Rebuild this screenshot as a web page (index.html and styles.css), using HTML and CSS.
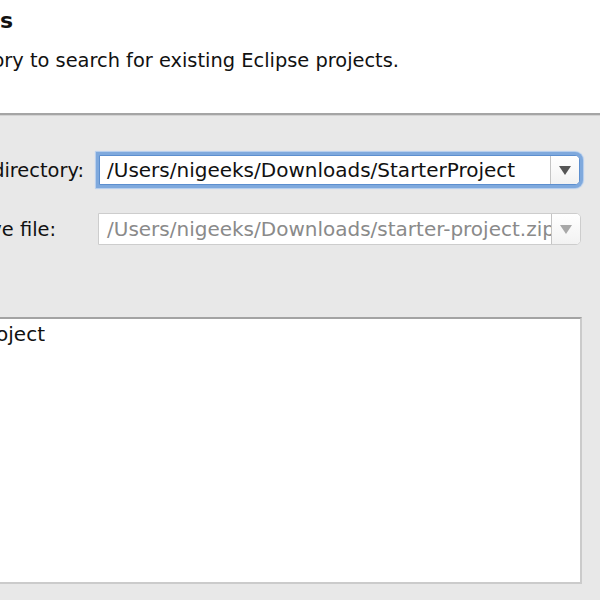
FILE: index.html
```html
<!DOCTYPE html>
<html>
<head>
<meta charset="utf-8">
<link rel="stylesheet" href="styles.css">
</head>
<body>
<div class="header">
  <div class="clip title-clip"><span class="title">Import Projects</span></div>
  <div class="clip sub-clip"><span class="subtitle">Select a directory to search for existing Eclipse projects.</span></div>
</div>
<div class="content">
  <div class="form">
    <div class="clip label label-1"><span>Select root directory:</span></div>
    <div class="combo focused">
      <div class="combo-text">/Users/nigeeks/Downloads/StarterProject</div>
      <div class="combo-btn"><span class="arrow"></span></div>
    </div>
    <div class="clip label label-2"><span>Select archive file:</span></div>
    <div class="combo disabled">
      <div class="combo-text">/Users/nigeeks/Downloads/starter-project.zip</div>
      <div class="combo-btn"><span class="arrow"></span></div>
    </div>
  </div>
  <div class="tree">
    <div class="clip tree-item"><span>☑ StarterProject</span></div>
  </div>
</div>
</body>
</html>
```

FILE: styles.css
```css
html, body {
  margin: 0;
  padding: 0;
}
body {
  width: 600px;
  height: 600px;
  overflow: hidden;
  background: #e8e8e8;
  font-family: "DejaVu Sans", "Liberation Sans", sans-serif;
  font-size: 20px;
  color: #111;
}
.clip {
  display: flex;
  justify-content: flex-end;
  overflow: hidden;
  white-space: nowrap;
}
.header {
  height: 115px;
  background: #fff;
  border-bottom: 2px solid #a5a5a5;
  box-shadow: 0 1px 0 #d2d2d2;
  box-sizing: border-box;
  padding-top: 7px;
}
.title-clip {
  width: 13px;
}
.title {
  font-weight: bold;
  font-size: 22px;
  line-height: 28px;
}
.sub-clip {
  width: 399px;
  margin-top: 14px;
}
.subtitle {
  font-size: 19.4px;
  line-height: 24px;
}
.content {
  padding-top: 40px;
}
.form {
  display: grid;
  grid-template-columns: 99px 481px;
  row-gap: 28px;
  align-items: center;
}
.label {
  padding-right: 15px;
  box-sizing: border-box;
  font-size: 19.4px;
}
.label-2 {
  padding-right: 43px;
}
.combo {
  display: flex;
  height: 30px;
  box-sizing: border-box;
  border: 1px solid #a9a9a9;
  border-radius: 0 5px 5px 0;
  background: #fff;
  overflow: hidden;
}
.combo.focused {
  box-shadow: 0 0 0 3px #7fa9dd, 0 0 1px 4px #b3cdee;
  border-color: #5d8fcf;
}
.combo.disabled {
  height: 32px;
  margin-left: -1px;
  width: 483px;
  border-color: #cdcdcd;
  color: #8a8a8a;
}
.combo-text {
  flex: 1;
  padding-left: 7px;
  line-height: 28px;
  white-space: nowrap;
  overflow: hidden;
}
.disabled .combo-text {
  line-height: 30px;
  padding-left: 8px;
}
.combo-btn {
  width: 28px;
  border-left: 1px solid #c4c4c4;
  background: linear-gradient(#ffffff, #f2f2f2);
  display: flex;
  align-items: center;
  justify-content: center;
}
.arrow {
  width: 0;
  height: 0;
  border-left: 6px solid transparent;
  border-right: 6px solid transparent;
  border-top: 9px solid #555;
}
.disabled .arrow {
  border-top-color: #a8a8a8;
}
.tree {
  margin-top: 72px;
  width: 582px;
  height: 267px;
  box-sizing: border-box;
  background: #fff;
  border-top: 2px solid #a3a3a3;
  border-right: 2px solid #cbcbcb;
  border-bottom: 2px solid #cbcbcb;
}
.tree-item {
  width: 45px;
  line-height: 24px;
  margin-top: 3px;
}
```
